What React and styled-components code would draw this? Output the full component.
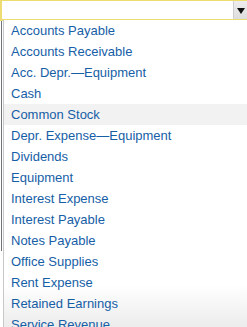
import React from "react";
import styled, { createGlobalStyle } from "styled-components";

const GlobalStyle = createGlobalStyle`
  * {
    margin: 0;
    padding: 0;
    box-sizing: border-box;
  }
  body {
    background: #fff;
    font-family: "Liberation Sans", Arial, sans-serif;
    overflow: hidden;
  }
`;

const Page = styled.div`
  position: relative;
  width: 247px;
  height: 327px;
  overflow: hidden;
  background: #fff;
`;

const SelectBox = styled.div`
  display: flex;
  height: 21px;
  border: 2px solid #ecdc72;
  border-right: none;
  border-top-width: 1px;
  background: #fff;
`;

const SelectValue = styled.div`
  flex: 1;
`;

const ArrowButton = styled.div`
  width: 14px;
  display: flex;
  align-items: center;
  justify-content: center;
  background: linear-gradient(#eeeeee, #dddddd);
  border-left: 1px solid #cfcfcf;
`;

const Triangle = styled.div`
  width: 0;
  height: 0;
  border-left: 4px solid transparent;
  border-right: 4px solid transparent;
  border-top: 6px solid #111;
  margin-top: 1px;
`;

const PageEdge = styled.div`
  position: absolute;
  left: 1px;
  top: 21px;
  width: 1px;
  height: 230px;
  background: #6d7479;
`;

const Menu = styled.ul`
  position: absolute;
  left: 3px;
  top: 20px;
  right: 0;
  bottom: 0;
  list-style: none;
  background: linear-gradient(#ffffff 0, #ffffff 265px, #ececec 100%);
  border-left: 1px solid #c8c8c8;
  overflow: hidden;
`;

const Option = styled.li`
  height: 21px;
  line-height: 21px;
  padding-left: 7px;
  font-size: 13px;
  color: #165ea6;
  white-space: nowrap;
  background: ${(p) => (p.$active ? "#f2f2f2" : "transparent")};
`;

const accounts = [
  "Accounts Payable",
  "Accounts Receivable",
  "Acc. Depr.\u2014Equipment",
  "Cash",
  "Common Stock",
  "Depr. Expense\u2014Equipment",
  "Dividends",
  "Equipment",
  "Interest Expense",
  "Interest Payable",
  "Notes Payable",
  "Office Supplies",
  "Rent Expense",
  "Retained Earnings",
  "Service Revenue",
];

function App() {
  return (
    <>
      <GlobalStyle />
      <Page>
        <SelectBox>
          <SelectValue />
          <ArrowButton>
            <Triangle />
          </ArrowButton>
        </SelectBox>
        <PageEdge />
        <Menu>
          {accounts.map((name) => (
            <Option key={name} $active={name === "Common Stock"}>
              {name}
            </Option>
          ))}
        </Menu>
      </Page>
    </>
  );
}

export default App;
